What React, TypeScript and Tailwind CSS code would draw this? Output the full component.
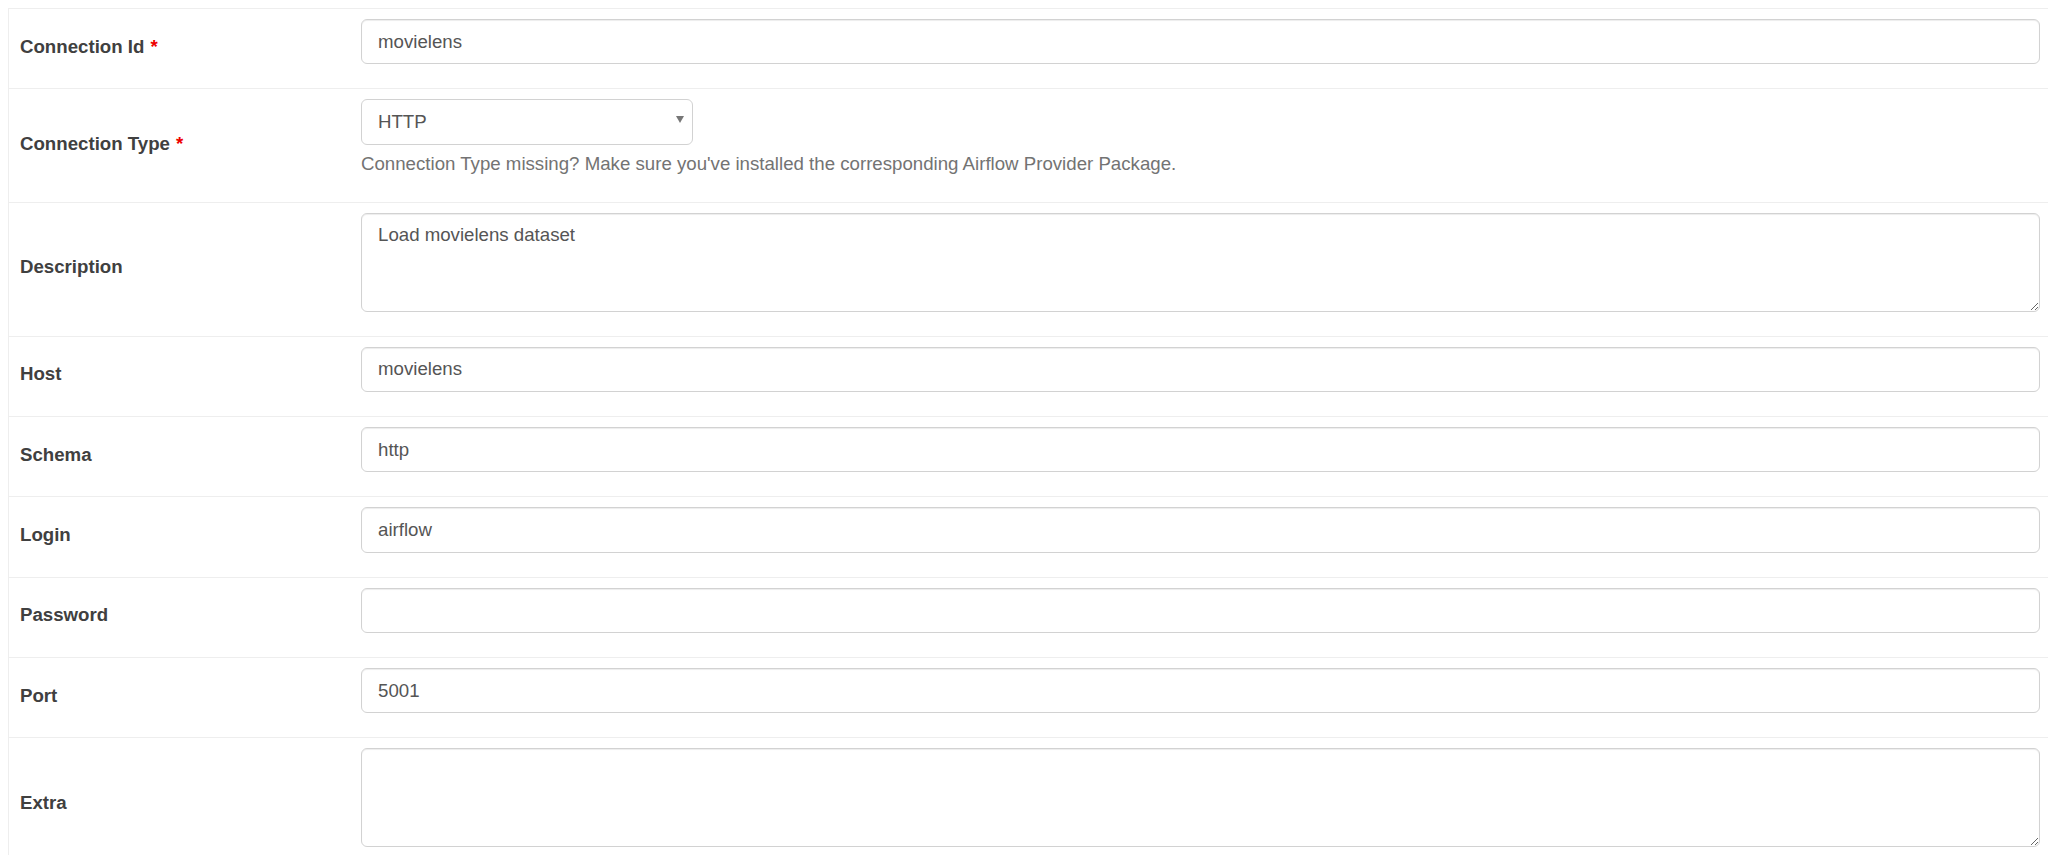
import React from "react";

const font = { fontFamily: '"Liberation Sans", Arial, Helvetica, sans-serif' };

const inputCls =
  "block w-full h-[45.33px] px-[16px] text-[18.67px] text-[#555] bg-white border border-[#d2d2d2] rounded-[6px] shadow-[inset_0_1px_1px_rgba(0,0,0,0.075)] outline-none";

const textareaCls =
  "block w-full h-[98.67px] px-[16px] py-[8px] leading-[26.67px] text-[18.67px] text-[#555] bg-white border border-[#d2d2d2] rounded-[6px] shadow-[inset_0_1px_1px_rgba(0,0,0,0.075)] outline-none resize-y";

function Row({
  label,
  required,
  children,
}: {
  label: string;
  required?: boolean;
  children: React.ReactNode;
}) {
  return (
    <div className="grid grid-cols-[341px_1fr] border-t border-[#eeeeee]">
      <div className="flex items-center pl-[11px] pb-[4px] text-[18.67px] font-bold text-[#404040]">
        <span>
          {label}
          {required && <span className="text-[#e00] ml-[6px]">*</span>}
        </span>
      </div>
      <div className="pt-[10px] pb-[24px] pl-[11px] pr-[8px]">{children}</div>
    </div>
  );
}

export default function App() {
  return (
    <div className="h-[855px] overflow-hidden bg-white pt-[8px] pl-[8px]" style={font}>
      <div className="border-l border-[#eeeeee]">
        <Row label="Connection Id" required>
          <input className={inputCls} defaultValue="movielens" />
        </Row>

        <Row label="Connection Type" required>
          <div className="relative w-[332px]">
            <select
              className="block w-full h-[45.33px] pl-[16px] pr-[30px] text-[18.67px] text-[#555] bg-white border border-[#d2d2d2] rounded-[6px] appearance-none outline-none"
              defaultValue="HTTP"
            >
              <option>HTTP</option>
            </select>
            <span className="pointer-events-none absolute right-[9px] top-[17px] w-0 h-0 border-l-[4px] border-r-[4px] border-t-[7px] border-l-transparent border-r-transparent border-t-[#777]" />
          </div>
          <p className="mt-[6.67px] leading-[26.67px] text-[18.67px] text-[#737373]">
            Connection Type missing? Make sure you've installed the corresponding Airflow Provider Package.
          </p>
        </Row>

        <Row label="Description">
          <textarea className={textareaCls} defaultValue="Load movielens dataset" />
        </Row>

        <Row label="Host">
          <input className={inputCls} defaultValue="movielens" />
        </Row>

        <Row label="Schema">
          <input className={inputCls} defaultValue="http" />
        </Row>

        <Row label="Login">
          <input className={inputCls} defaultValue="airflow" />
        </Row>

        <Row label="Password">
          <input className={inputCls} type="password" defaultValue="" />
        </Row>

        <Row label="Port">
          <input className={inputCls} defaultValue="5001" />
        </Row>

        <Row label="Extra">
          <textarea className={textareaCls} defaultValue="" />
        </Row>
      </div>
    </div>
  );
}
